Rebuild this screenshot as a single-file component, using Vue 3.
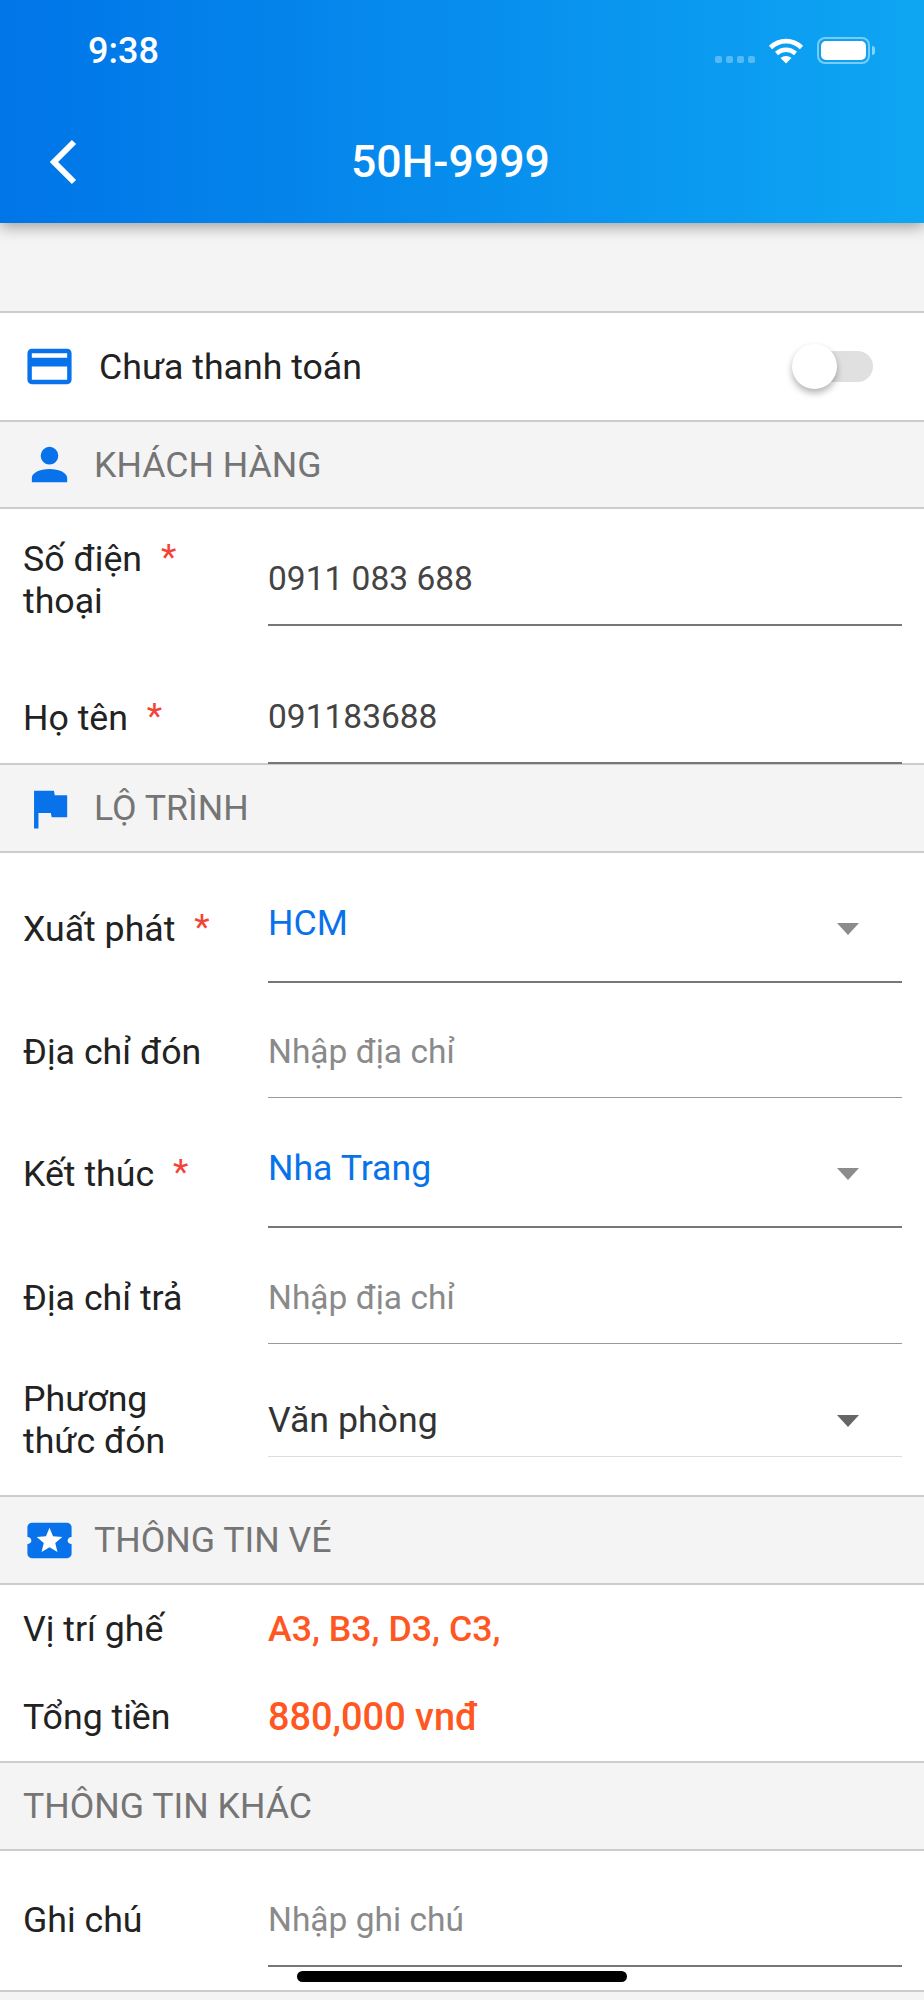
<script setup>
const seats = 'A3, B3, D3, C3,';
const total = '880,000 vnđ';
</script>

<template>
  <div class="screen">
    <header class="header">
      <div class="status-bar">
        <span class="time">9:38</span>
        <div class="status-icons">
          <div class="signal"><i></i><i></i><i></i><i></i></div>
          <svg class="wifi" viewBox="0 0 36 27" width="36" height="27">
            <path d="M2.5 10.5C11.5 2 24.5 2 33.5 10.5" fill="none" stroke="#fff" stroke-width="4.6" />
            <path d="M8.5 16.5C14 11.5 22 11.5 27.5 16.5" fill="none" stroke="#fff" stroke-width="4.4" />
            <path d="M12.5 21C15.5 18.3 20.5 18.3 23.5 21L18 26.5z" fill="#fff" />
          </svg>
          <div class="battery"><div class="battery-level"></div></div>
          <div class="battery-nub"></div>
        </div>
      </div>
      <div class="nav-bar">
        <svg class="back" viewBox="0 0 32 48" width="32" height="48">
          <path d="M27 4L7 24l20 20" fill="none" stroke="#fff" stroke-width="6" />
        </svg>
        <h1 class="title">50H-9999</h1>
      </div>
    </header>

    <div class="spacer"></div>

    <div class="pay-row">
      <svg class="icon" viewBox="0 0 24 24">
        <path d="M20 4H4c-1.11 0-1.99.89-1.99 2L2 18c0 1.11.89 2 2 2h16c1.11 0 2-.89 2-2V6c0-1.11-.89-2-2-2zm0 14H4v-6h16v6zm0-10H4V6h16v2z" />
      </svg>
      <span class="pay-label">Chưa thanh toán</span>
      <div class="switch"><div class="switch-thumb"></div></div>
    </div>

    <div class="section">
      <svg class="icon" viewBox="0 0 24 24">
        <path d="M12 4a4 4 0 0 1 4 4 4 4 0 0 1-4 4 4 4 0 0 1-4-4 4 4 0 0 1 4-4m0 10c4.42 0 8 1.79 8 4v2H4v-2c0-2.21 3.58-4 8-4z" />
      </svg>
      <span>KHÁCH HÀNG</span>
    </div>

    <div class="row phone-row">
      <div class="label"><span>Số điện <b class="required">*</b><br />thoại</span></div>
      <div class="field field-strong"><span class="value">0911 083 688</span></div>
    </div>
    <div class="row name-row">
      <div class="label"><span>Họ tên <b class="required">*</b></span></div>
      <div class="field field-strong"><span class="value">091183688</span></div>
    </div>

    <div class="section section-route">
      <svg class="icon" viewBox="0 0 24 24">
        <path d="M14.4 6L14 4H5v17h2v-7h5.6l.4 2h7V6z" />
      </svg>
      <span>LỘ TRÌNH</span>
    </div>

    <div class="row select-row">
      <div class="label label-low"><span>Xuất phát <b class="required">*</b></span></div>
      <div class="field field-strong field-select">
        <span class="selected">HCM</span>
        <i class="caret caret-light"></i>
      </div>
    </div>
    <div class="row address-row">
      <div class="label"><span>Địa chỉ đón</span></div>
      <div class="field"><span class="placeholder">Nhập địa chỉ</span></div>
    </div>
    <div class="row select-row">
      <div class="label label-low"><span>Kết thúc <b class="required">*</b></span></div>
      <div class="field field-strong field-select">
        <span class="selected">Nha Trang</span>
        <i class="caret caret-light"></i>
      </div>
    </div>
    <div class="row address-row address-last">
      <div class="label"><span>Địa chỉ trả</span></div>
      <div class="field"><span class="placeholder">Nhập địa chỉ</span></div>
    </div>
    <div class="row method-row">
      <div class="label"><span>Phương<br />thức đón</span></div>
      <div class="field field-soft field-select">
        <span class="method">Văn phòng</span>
        <i class="caret caret-dark"></i>
      </div>
    </div>

    <div class="section section-tall">
      <svg class="icon" viewBox="0 0 24 24">
        <path d="M4 4h16c1.1 0 2 .9 2 2v4.4c-1 0-1.8.7-1.8 1.6s.8 1.6 1.8 1.6V18c0 1.1-.9 2-2 2H4c-1.1 0-2-.9-2-2v-4.4c1 0 1.8-.7 1.8-1.6S3 10.4 2 10.4V6c0-1.1.9-2 2-2z" />
        <path class="star" d="M12 6.2l1.6 3.9 4.2.3-3.2 2.7 1 4.1-3.6-2.2-3.6 2.2 1-4.1-3.2-2.7 4.2-.3z" />
      </svg>
      <span>THÔNG TIN VÉ</span>
    </div>

    <div class="ticket">
      <div class="ticket-row">
        <span>Vị trí ghế</span>
        <span class="amount">{{ seats }}</span>
      </div>
      <div class="ticket-row">
        <span>Tổng tiền</span>
        <span class="amount amount-total">{{ total }}</span>
      </div>
    </div>

    <div class="section section-tall"><span>THÔNG TIN KHÁC</span></div>

    <div class="row note-row">
      <div class="label"><span>Ghi chú</span></div>
      <div class="field field-strong"><span class="placeholder">Nhập ghi chú</span></div>
    </div>

    <div class="footer"></div>
    <div class="home-indicator"></div>
  </div>
</template>

<style>
body {
  background: #fff;
}
</style>

<style scoped>
.screen {
  position: relative;
  height: 2000px;
  overflow: hidden;
  background: #fff;
  color: #222;
  font-family: Roboto, "Noto Sans", sans-serif;
  font-size: 35.7px;
}

.header {
  position: relative;
  z-index: 1;
  height: 223px;
  background: linear-gradient(90deg, #0075e8, #0ea6f3);
  box-shadow: 0 4px 14px rgba(0, 0, 0, 0.35);
  color: #fff;
}

.status-bar {
  height: 100px;
  display: flex;
  align-items: center;
  justify-content: space-between;
  padding: 2px 49px 0 88px;
  box-sizing: border-box;
}

.time {
  font-size: 36px;
  font-weight: 500;
}

.status-icons {
  display: flex;
  align-items: flex-end;
  margin-top: -2px;
}

.signal {
  display: flex;
  gap: 4px;
  margin-right: 13px;
  padding-bottom: 1px;
}

.signal i {
  width: 7px;
  height: 7px;
  border-radius: 2px;
  background: rgba(255, 255, 255, 0.3);
}

.wifi {
  margin-right: 13px;
}

.battery {
  box-sizing: border-box;
  width: 53px;
  height: 27px;
  padding: 2px;
  border: 2px solid rgba(255, 255, 255, 0.45);
  border-radius: 8px;
}

.battery-level {
  height: 100%;
  border-radius: 5px;
  background: #fff;
}

.battery-nub {
  width: 3px;
  height: 9px;
  margin: 0 0 9px 2px;
  border-radius: 0 3px 3px 0;
  background: rgba(255, 255, 255, 0.5);
}

.nav-bar {
  display: flex;
  align-items: center;
  height: 123px;
  padding-left: 47px;
  box-sizing: border-box;
}

.back {
  flex: none;
}

.title {
  margin: 0 0 0 272px;
  font-size: 44.6px;
  font-weight: 500;
}

.spacer {
  height: 88px;
  background: #f4f4f4;
  border-bottom: 2px solid #ccc;
}

.icon {
  flex: none;
  width: 53px;
  height: 53px;
  fill: #0872ea;
}

.star {
  fill: #fff;
}

.pay-row {
  display: flex;
  align-items: center;
  box-sizing: border-box;
  height: 107px;
  padding: 0 51px 0 23px;
}

.pay-label {
  margin-left: 23px;
  flex: 1;
}

.switch {
  position: relative;
  width: 72px;
  height: 31px;
  border-radius: 16px;
  background: #e0e0e0;
}

.switch-thumb {
  position: absolute;
  left: -9px;
  top: -7px;
  width: 45px;
  height: 45px;
  border-radius: 50%;
  background: #fff;
  box-shadow: 0 4px 7px rgba(0, 0, 0, 0.3);
}

.section {
  display: flex;
  align-items: center;
  gap: 18px;
  box-sizing: border-box;
  height: 89px;
  padding-left: 23px;
  background: #f4f4f4;
  border-top: 2px solid #ccc;
  border-bottom: 2px solid #ccc;
  color: #757575;
}

.section-route {
  height: 90px;
  margin-top: -1px;
}

.section-tall {
  height: 90px;
}

.row {
  display: grid;
  grid-template-columns: 245px 1fr;
  align-items: center;
  padding: 0 22px 0 23px;
}

.label {
  line-height: 42px;
}

.label-low {
  padding-top: 8px;
}

.required {
  margin-left: 10px;
  color: #f44336;
  font-weight: 400;
  vertical-align: 2px;
}

.field {
  display: flex;
  align-items: center;
  box-sizing: border-box;
  height: 92px;
  border-bottom: 1px solid #999;
}

.field-strong {
  border-bottom: 2px solid #777;
}

.field-soft {
  height: 73px;
  border-bottom: 1px solid #ddd;
}

.field-select {
  justify-content: space-between;
  padding-right: 43px;
}

.phone-row {
  margin-top: 25px;
}

.phone-row .label,
.name-row .label,
.note-row .label {
  margin-bottom: 2px;
}

.phone-row .field,
.name-row .field,
.note-row .field {
  padding-bottom: 2px;
}

.name-row {
  position: relative;
  z-index: 1;
  margin-top: 46px;
}

.select-row {
  margin-top: 12px;
}

.select-row .field {
  height: 118px;
}

.address-row {
  margin-top: 23px;
}

.address-last {
  margin-top: 24px;
}

.method-row {
  margin-top: 34px;
  padding-bottom: 33px;
}

.value {
  color: #444;
  font-size: 33.5px;
}

.selected {
  color: #0872ea;
}

.method {
  color: #333;
}

.placeholder {
  color: #8a8a8a;
  font-size: 33.5px;
}

.caret {
  margin-top: 12px;
  border-left: 11px solid transparent;
  border-right: 11px solid transparent;
  border-top: 12px solid #666;
}

.caret-light {
  border-top-color: #8c8c8c;
}

.caret-dark {
  margin-top: 2px;
}

.ticket {
  display: flex;
  flex-direction: column;
  gap: 44px;
  box-sizing: border-box;
  height: 176px;
  padding: 22px 0 0 23px;
}

.ticket-row {
  display: grid;
  grid-template-columns: 245px 1fr;
  align-items: center;
  height: 44px;
}

.amount {
  color: #ff5722;
  font-weight: 500;
}

.amount-total {
  font-size: 37.9px;
}

.note-row {
  margin-top: 24px;
}

.footer {
  height: 200px;
  margin-top: 23px;
  background: #f4f4f4;
  border-top: 2px solid #ccc;
}

.home-indicator {
  position: absolute;
  left: 297px;
  top: 1971px;
  width: 330px;
  height: 11px;
  border-radius: 6px;
  background: #000;
}
</style>
